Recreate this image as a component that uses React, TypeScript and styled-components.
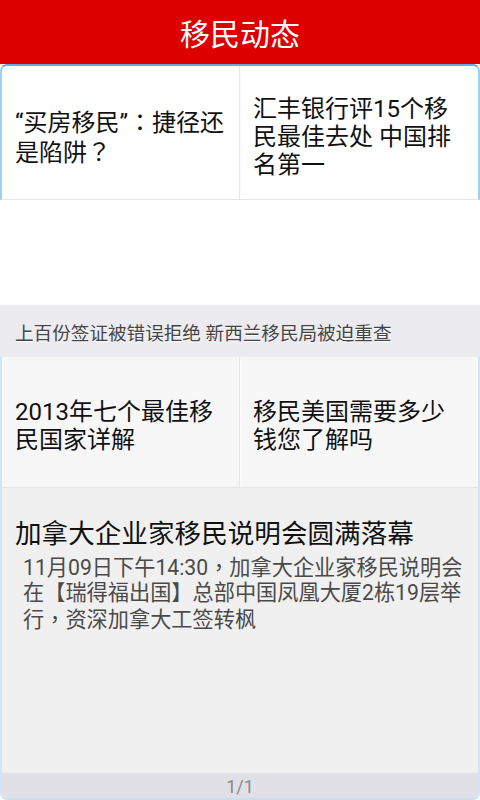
import React from "react";
import styled, { createGlobalStyle } from "styled-components";

const Global = createGlobalStyle`
  html, body { margin: 0; padding: 0; background: #ffffff; }
  body { font-family: "Roboto", "Noto Sans CJK SC", sans-serif; }
  * { box-sizing: border-box; }
`;

const FONT = `"Roboto", "Noto Sans CJK SC", sans-serif`;

const Page = styled.div`
  width: 480px;
  height: 800px;
  display: flex;
  flex-direction: column;
  background: #ffffff;
  font-family: ${FONT};
`;

/* Full-width punctuation drawn centred in its cell, as on the device */
const Punct = styled.span`
  font-family: "Noto Sans CJK TC", sans-serif;
`;

const Header = styled.header`
  height: 64px;
  flex: none;
  background: #dd0000;
  display: flex;
  align-items: center;
  justify-content: center;
  color: #ffffff;
  font-size: 30px;
  letter-spacing: 0;
`;

const TopCard = styled.section`
  height: 136px;
  flex: none;
  display: grid;
  grid-template-columns: 1fr 1fr;
  background: #ffffff;
  border-top: 2px solid #5aaef0;
  border-left: 2px solid #9fd0f4;
  border-right: 2px solid #9fd0f4;
  border-bottom: 1px solid #e6e6e6;
  border-radius: 7px 7px 0 0;
`;

const Cell = styled.div<{ $divider?: boolean }>`
  display: flex;
  align-items: center;
  padding: 8px 13px 0 13px;
  border-right: ${(p) => (p.$divider ? "1px solid #e8e8e8" : "none")};
  box-shadow: ${(p) => (p.$divider ? "1px 0 0 #fafafa" : "none")};
  font-size: 24px;
  line-height: 28px;
  color: #111111;
`;

const BannerGap = styled.div`
  height: 105px;
  flex: none;
  background: #ffffff;
`;

const Strip = styled.div`
  height: 52px;
  flex: none;
  background: #ebebf0;
  display: flex;
  align-items: center;
  padding-left: 15px;
  font-size: 18.6px;
  color: #444444;
  text-shadow: 0 1px 0 #ffffff;
`;

const Panel = styled.section`
  flex: 1;
  display: flex;
  flex-direction: column;
  border-left: 2px solid #cfe6f6;
  border-right: 2px solid #cfe6f6;
  border-bottom: 2px solid #c6e0f2;
  border-radius: 0 0 7px 7px;
  overflow: hidden;
  background: #f0f0f0;
`;

const Row = styled.div`
  height: 131px;
  flex: none;
  display: grid;
  grid-template-columns: 1fr 1fr;
  background: #f7f7f7;
  border-bottom: 1px solid #e4e4e4;
`;

const Feature = styled.div`
  flex: 1;
  padding: 30px 10px 0 13px;
  background: #f0f0f0;
`;

const FeatureTitle = styled.div`
  font-size: 26.6px;
  line-height: 32px;
  color: #111111;
  white-space: nowrap;
`;

const FeatureDesc = styled.div`
  margin-top: 3px;
  padding-left: 8px;
  padding-right: 4px;
  font-size: 21.2px;
  line-height: 25px;
  color: #4a4a4a;
`;

const Footer = styled.div`
  height: 25px;
  flex: none;
  background: #e1e0e6;
  display: flex;
  align-items: center;
  justify-content: center;
  font-size: 18px;
  color: #8a8a8a;
  padding-top: 2px;
`;

export default function App() {
  return (
    <>
      <Global />
      <Page>
        <Header>移民动态</Header>
        <TopCard>
          <Cell $divider>
            <span>
              “买房移民”<Punct>：</Punct>捷径还是陷阱<Punct>？</Punct>
            </span>
          </Cell>
          <Cell>汇丰银行评15个移民最佳去处 中国排名第一</Cell>
        </TopCard>
        <BannerGap />
        <Strip>上百份签证被错误拒绝 新西兰移民局被迫重查</Strip>
        <Panel>
          <Row>
            <Cell $divider>2013年七个最佳移民国家详解</Cell>
            <Cell>移民美国需要多少钱您了解吗</Cell>
          </Row>
          <Feature>
            <FeatureTitle>加拿大企业家移民说明会圆满落幕</FeatureTitle>
            <FeatureDesc>
              11月09日下午14:30<Punct>，</Punct>加拿大企业家移民说明会在【瑞得福出国】总部中国凤凰大厦2栋19层举行<Punct>，</Punct>资深加拿大工签转枫
            </FeatureDesc>
          </Feature>
          <Footer>1/1</Footer>
        </Panel>
      </Page>
    </>
  );
}
